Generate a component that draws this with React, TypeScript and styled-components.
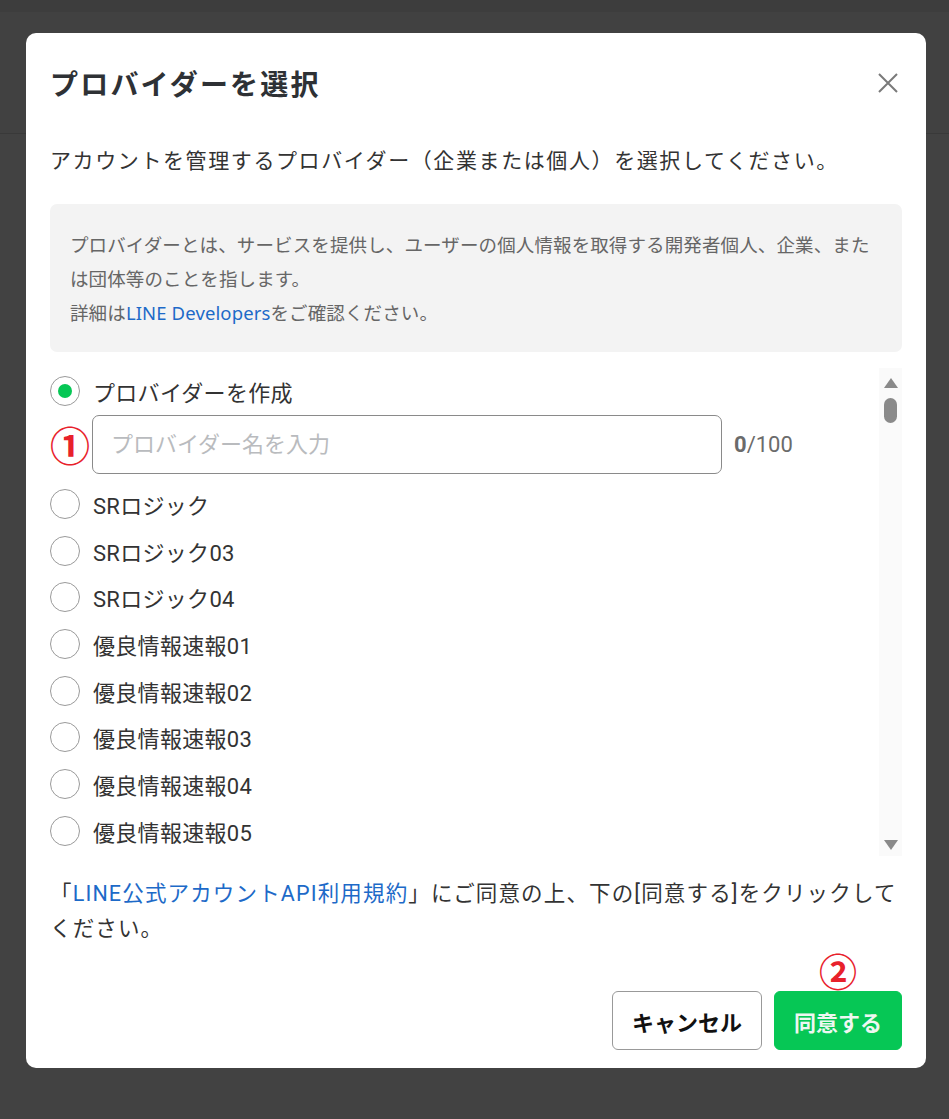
import React from "react";
import styled, { createGlobalStyle } from "styled-components";

const GlobalStyle = createGlobalStyle`
  html, body {
    margin: 0;
    padding: 0;
    background: #424242;
    font-family: Roboto, "Noto Sans CJK JP", "Noto Sans", sans-serif;
    color: #333;
  }
  * { box-sizing: border-box; }
`;

const Page = styled.div`
  position: relative;
  width: 949px;
  height: 1119px;
  overflow: hidden;
  background: #424242;
`;

const BackHeader = styled.div`
  height: 134px;
  border-top: 12px solid #3d3d3d;
  border-bottom: 1px solid #393939;
  background: #414141;
`;

const Overlay = styled.div`
  position: absolute;
  inset: 0;
  padding: 33px 0 0 26px;
`;

const Modal = styled.div`
  width: 900px;
  height: 1035px;
  background: #fff;
  border-radius: 10px;
  padding: 0 24px 18px 24px;
  display: flex;
  flex-direction: column;
`;

const Header = styled.div`
  height: 100px;
  display: flex;
  align-items: center;
  justify-content: space-between;
`;

const Title = styled.h1`
  margin: 0;
  font-size: 28px;
  font-weight: 700;
  letter-spacing: 2.2px;
  color: #2e3135;
  font-family: "Noto Sans CJK JP", sans-serif;
`;

const CloseButton = styled.button`
  width: 28px;
  height: 28px;
  padding: 0;
  border: none;
  background: transparent;
  display: flex;
  align-items: center;
  justify-content: center;
`;

const Description = styled.p`
  margin: 10px 0 0 0;
  font-size: 21px;
  line-height: 36px;
  letter-spacing: 1.6px;
  color: #333;
`;

const InfoBox = styled.div`
  margin-top: 25px;
  background: #f3f3f3;
  border-radius: 7px;
  padding: 24px 20px 22px 20px;
  font-size: 18.5px;
  line-height: 34px;
  letter-spacing: 0.12px;
  color: #666;
  font-family: "Noto Sans", "Noto Sans CJK JP", sans-serif;
`;

const Link = styled.a`
  color: #1d6ac8;
  text-decoration: none;
`;

const ListArea = styled.div`
  margin-top: 16px;
  height: 488px;
  display: flex;
  overflow: hidden;
`;

const List = styled.div`
  flex: 1;
  display: flex;
  flex-direction: column;
`;

const RadioRow = styled.label`
  height: 46.7px;
  flex: 0 0 46.7px;
  display: flex;
  align-items: center;
  gap: 13px;
  font-size: 22px;
  letter-spacing: 0.3px;
  color: #333;
`;

const RadioCircle = styled.span<{ $checked?: boolean }>`
  width: 30px;
  height: 30px;
  flex: 0 0 30px;
  border-radius: 50%;
  border: 1px solid #9a9a9a;
  display: flex;
  align-items: center;
  justify-content: center;
  background: #fff;

  &::after {
    content: "";
    width: 14px;
    height: 14px;
    border-radius: 50%;
    background: ${(p) => (p.$checked ? "#06c755" : "transparent")};
  }
`;

const InputRow = styled.div`
  height: 59px;
  flex: 0 0 59px;
  margin-bottom: 7px;
  display: flex;
  align-items: center;
`;

const Marker = styled.span`
  width: 42px;
  flex: 0 0 42px;
  font-size: 40px;
  font-weight: 700;
  line-height: 1;
  color: #e8212b;
  font-family: "Noto Sans CJK JP", sans-serif;
`;

const TextInput = styled.input`
  width: 630px;
  height: 59px;
  border: 1px solid #8a8a8a;
  border-radius: 7px;
  padding: 0 18px;
  font-size: 22px;
  font-family: Roboto, "Noto Sans CJK JP", sans-serif;
  color: #333;
  outline: none;

  &::placeholder {
    color: #b9bbbe;
  }
`;

const Counter = styled.span`
  margin-left: 12px;
  font-size: 22px;
  color: #6b6b6b;

  b {
    font-weight: 700;
  }
`;

const ScrollTrack = styled.div`
  width: 23px;
  flex: 0 0 23px;
  background: #fafafa;
  display: flex;
  flex-direction: column;
  align-items: center;
  padding-top: 10px;
`;

const ScrollArrow = styled.span<{ $down?: boolean }>`
  width: 0;
  height: 0;
  border-left: 7px solid transparent;
  border-right: 7px solid transparent;
  ${(p) =>
    p.$down
      ? "border-top: 10px solid #8a8a8a; margin-top: auto; margin-bottom: 6px;"
      : "border-bottom: 10px solid #8a8a8a;"}
`;

const ScrollThumb = styled.span`
  margin-top: 10px;
  width: 13px;
  height: 25px;
  border-radius: 7px;
  background: #8a8a8a;
`;

const Agreement = styled.p`
  margin: 20px 0 0 0;
  font-size: 21.5px;
  line-height: 35px;
  letter-spacing: 1.15px;
  color: #333;
`;

const Footer = styled.div`
  margin-top: auto;
  display: flex;
  justify-content: flex-end;
  gap: 12px;
`;

const ButtonWrap = styled.div`
  position: relative;
`;

const Button = styled.button<{ $primary?: boolean }>`
  height: 59px;
  min-width: ${(p) => (p.$primary ? "128px" : "150px")};
  padding: 0 18px;
  border-radius: 6px;
  border: 1px solid ${(p) => (p.$primary ? "#06c755" : "#999")};
  background: ${(p) => (p.$primary ? "#06c755" : "#fff")};
  color: ${(p) => (p.$primary ? "#eef7f1" : "#111")};
  font-size: 22px;
  font-weight: 700;
  font-family: "Noto Sans CJK JP", sans-serif;
`;

const Badge = styled.span`
  position: absolute;
  left: 50%;
  top: -40px;
  transform: translateX(-50%);
  font-size: 38px;
  font-weight: 700;
  line-height: 1;
  color: #e8212b;
  font-family: "Noto Sans CJK JP", sans-serif;
`;

const providers = [
  "SRロジック",
  "SRロジック03",
  "SRロジック04",
  "優良情報速報01",
  "優良情報速報02",
  "優良情報速報03",
  "優良情報速報04",
  "優良情報速報05",
];

export default function App() {
  return (
    <>
      <GlobalStyle />
      <Page>
        <BackHeader />
        <Overlay>
          <Modal>
            <Header>
              <Title>プロバイダーを選択</Title>
              <CloseButton aria-label="close">
                <svg width="22" height="22" viewBox="0 0 22 22">
                  <path d="M2 2 L20 20 M20 2 L2 20" stroke="#7a7a7a" strokeWidth="2" fill="none" />
                </svg>
              </CloseButton>
            </Header>
            <Description>
              アカウントを管理するプロバイダー（企業または個人）を選択してください。
            </Description>
            <InfoBox>
              プロバイダーとは、サービスを提供し、ユーザーの個人情報を取得する開発者個人、企業、または団体等のことを指します。
              <br />
              詳細は<Link href="#">LINE Developers</Link>をご確認ください。
            </InfoBox>
            <ListArea>
              <List>
                <RadioRow>
                  <RadioCircle $checked />
                  プロバイダーを作成
                </RadioRow>
                <InputRow>
                  <Marker>①</Marker>
                  <TextInput placeholder="プロバイダー名を入力" />
                  <Counter>
                    <b>0</b>/100
                  </Counter>
                </InputRow>
                {providers.map((name) => (
                  <RadioRow key={name}>
                    <RadioCircle />
                    {name}
                  </RadioRow>
                ))}
              </List>
              <ScrollTrack>
                <ScrollArrow />
                <ScrollThumb />
                <ScrollArrow $down />
              </ScrollTrack>
            </ListArea>
            <Agreement>
              「<Link href="#">LINE公式アカウントAPI利用規約</Link>」にご同意の上、下の[同意する]をクリックしてください。
            </Agreement>
            <Footer>
              <ButtonWrap>
                <Button>キャンセル</Button>
              </ButtonWrap>
              <ButtonWrap>
                <Badge>②</Badge>
                <Button $primary>同意する</Button>
              </ButtonWrap>
            </Footer>
          </Modal>
        </Overlay>
      </Page>
    </>
  );
}
